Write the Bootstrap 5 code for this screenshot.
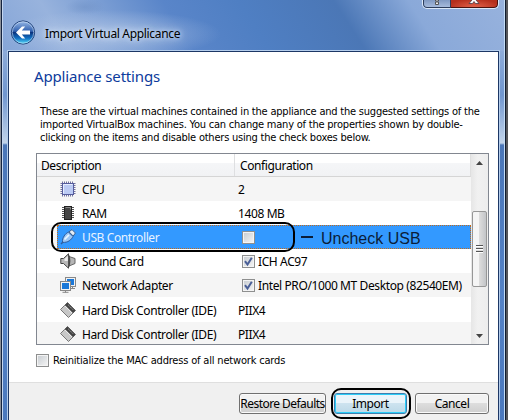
<!DOCTYPE html>
<html lang="en">
<head>
<meta charset="utf-8">
<title>Import Virtual Applicance</title>
<link href="https://cdn.jsdelivr.net/npm/bootstrap@5.3.0/dist/css/bootstrap.min.css" rel="stylesheet">
<style>
body{width:508px;height:420px;overflow:hidden;background:linear-gradient(90deg,#8a8f98 0 2px,#55565a 2px);font-family:"DejaVu Sans Condensed","DejaVu Sans",sans-serif;font-stretch:condensed;font-size:11px;line-height:13px;color:#000}
.window{width:505px;height:420px;margin-left:1px;border-left:1px solid #14233f;border-right:1px solid #101c30;padding:0 6px 0 6px;
 background:linear-gradient(180deg,#9db8df 0,#8eacd9 50px,#7096cf 95px,#c2d4ea 143px,#4a76b8 145px,#5482c6 300px,#4a78bd 420px);box-shadow:inset 1px 0 #c4d6ef,inset -1px 0 #c4dcf5;position:relative}
.titlebar{height:51px;margin:0 -5px;padding-left:7px;
 background:radial-gradient(ellipse 110px 24px at 108px 34px,#b5c9e8c0,#a9c0e400),radial-gradient(ellipse 20px 8px at 82px 7px,#6d8fc480,#6d8fc400),linear-gradient(57deg,#86a6d8 0,#98b3dd 13%,#5985c9 36%,#4f7fc3 50%,#4b77b6 68%,#8aa9d9 82%,#97b2dd 100%)}
.ttl{font-family:"Noto Sans","Open Sans",sans-serif;font-size:12px;letter-spacing:-.33px;text-shadow:0 0 5px #dce8f8,0 0 8px #cfdff5;margin:15px 0 0 9px}
.back-ico{margin-top:19px}
.capt{position:absolute;right:6px;top:0;width:77px;height:9px;border:1px solid #dbe8f8;border-top:0;border-radius:0 0 5px 5px;overflow:hidden}
.capt .help{width:28px;background:linear-gradient(#8099c2,#a6bbdc);border:1px solid #2c3d5c;border-top:0;border-bottom-left-radius:4px}
.capt .cls{background:radial-gradient(ellipse at 50% 100%,#e2624a,#b52f1c 80%);border:1px solid #4b120d;border-top:0;border-left:0;border-bottom-right-radius:4px}
.client{height:369px;border:1px solid #1d3765;border-bottom:0;outline:1px solid #b4cdec;background:#fff}
.page-part{height:330px;padding:16px 9px 0 25px}
.heading{font-family:"Noto Sans","Open Sans",sans-serif;font-size:15px;font-weight:400;letter-spacing:-.17px;line-height:16px;color:#0d3b9c;margin:0}
.intro{margin:21px 0 0 6px;white-space:nowrap;letter-spacing:-.215px}
.l3{letter-spacing:-.22px}
.tree{width:453px;height:192px;margin:9px 0 0 2px;border:1px solid #828790;font-family:"Noto Sans","Open Sans",sans-serif;font-size:12px;line-height:15px;letter-spacing:-.39px}
.hdr{height:23px;background:linear-gradient(#fff 0 9px,#f5f6f8 9px,#f1f2f4);border-bottom:1px solid #d5d5d5;border-right:1px solid #dfdfdf}
.hdr span{padding-top:1px}
.hdr .c1{width:198px;border-right:1px solid #dedfe1;padding-left:4px}
.hdr .c2{padding-left:5px}
.item{height:24.1px}
.item:nth-child(even){background:#f5f5f5}
.item .ico{width:16px;height:16px;margin:0 6px 0 23px;flex:none}
.item .nm{width:155px;flex:none}
.item .val{white-space:nowrap;margin-left:1px;flex:none}
.item span{display:block;line-height:22px;padding-top:2px}
.sel{background:linear-gradient(90deg,#f5f5f5 20px,#39f 20px)!important;color:#e8f3ff;position:relative}
.sel::after{content:"";position:absolute;left:20px;right:0;top:0;bottom:0;border:1px dotted #c06a1c}
.chk{width:13px;height:13px;border:1px solid #8e8f8f;background:linear-gradient(135deg,#c6cbd0,#f6f6f6);box-shadow:inset 0 0 0 1px #f4f4f4;flex:none}
.val .chk{margin:0 3px 0 4px}
.sbar{width:17px;background:linear-gradient(90deg,#e6e6e6,#f1f1f1 40%,#ededed)}
.thumb{width:15px;height:76px;margin:0 1px;border:1px solid #979797;border-radius:2px;background:linear-gradient(90deg,#f5f5f5 0 45%,#dcdcdc 50%,#c3c5c8)}
.grip{width:7px;height:8px;background:repeating-linear-gradient(#555 0 1px,#fff 1px 2px,#ddd 2px 3px)}
.mac{margin:8px 0 0 2px;letter-spacing:-.18px}
.mac span{padding-top:1px}
.ring{position:absolute;border:2px solid #000}
.ring-usb{left:49px;top:222px;width:244px;height:30px;border-radius:10px}
.ring-imp{left:329px;top:388px;width:80px;height:31px;border-radius:10px}
.note{position:absolute;left:299px;top:229px;font:16px/20px "Liberation Sans",Arial,sans-serif;color:#0b1d38;white-space:nowrap}
.note i{display:inline-block;width:12px;height:2px;background:#0b1d38;vertical-align:6px;margin-right:8px}
.foot{height:38px;background:#f0f0f0;border-top:1px solid #dfdfdf;padding:10px 9px 0 0}
.wbtn{height:21px;padding:0;border:1px solid #707070;border-radius:3px;font-family:"Noto Sans","Open Sans",sans-serif;font-size:12px;letter-spacing:-.45px;line-height:19px;background:linear-gradient(#f2f2f2 0 47%,#dddddd 50%,#cfcfcf);box-shadow:inset 0 0 0 1px #fafafa;color:#000;white-space:nowrap}
.wbtn.def{border-color:#3c7fb1;box-shadow:inset 0 0 0 1px #2ccdf7;background:linear-gradient(#eaf4fa 0 47%,#cde3ef 50%,#bcd9e8)}
.w-std{width:74px}.w-imp{width:73px}.w-rest{width:87px}.w-rest span{margin:0 -4px;letter-spacing:-.55px}
</style>
</head>
<body>
<div class="window">
 <div class="titlebar d-flex align-items-start">
  <svg class="back-ico" width="26" height="26" viewBox="0 0 26 26"><defs><linearGradient id="orb" x2="0" y2="1"><stop offset="0" stop-color="#9bbbe8"/><stop offset=".45" stop-color="#2f5fae"/><stop offset=".5" stop-color="#0b347f"/><stop offset=".75" stop-color="#1272c4"/><stop offset="1" stop-color="#5fe3fb"/></linearGradient></defs><circle cx="13" cy="13.500" r="11.600" fill="url(#orb)" stroke="#24457d"/><circle cx="13" cy="13.500" r="10.700" fill="none" stroke="#d5e7fa" stroke-opacity=".7" stroke-width=".8"/><path d="M6 13.500 12 7.500h3.200L11.800 11.600H20v3.800h-8.200l3.400 4.100H12z" fill="#fff"/></svg>
  <div class="ttl"><span class="d-block mt-2 pt-1">Import Virtual Applicance</span></div>
 </div>
 <div class="capt d-flex"><div class="help"><svg class="d-block mx-auto" width="8" height="6" viewBox="0 0 8 6"><path d="M2.500-1h3v2h-3zM2.500 2h3v2.500h-3z" fill="#eee" stroke="#555"/></svg></div><div class="cls flex-fill"><svg class="d-block mx-auto" width="12" height="5" viewBox="0 0 12 5"><path d="M3.500-2h5L8 0l3 3.500H7.500L6 1.500 4.500 3.500H1L4 0z" fill="#fff" stroke="#4a3a44" stroke-width=".8"/></svg></div></div>
 <div class="client">
  <div class="page-part">
   <h1 class="heading"><span>Appliance settings</span></h1>
   <div class="intro"><span class="l1">These are the virtual machines contained in the appliance and the suggested settings of the</span><br><span class="l2">imported VirtualBox machines. You can change many of the properties shown by double-</span><br><span class="l3">clicking on the items and disable others using the check boxes below.</span></div>
   <div class="tree d-flex">
    <div class="flex-fill overflow-hidden">
     <div class="hdr d-flex align-items-stretch"><div class="c1 d-flex align-items-center"><span>Description</span></div><div class="c2 d-flex align-items-center"><span>Configuration</span></div></div>
     <div class="item d-flex align-items-center"><svg class="ico" viewBox="0 0 16 16"><path d="M2 1.500h12M2 14.500h12M1.500 2v12M14.500 2v12" stroke="#3a3c78" stroke-opacity=".7" stroke-width="2" stroke-dasharray="1 1"/><rect x="2.500" y="2.500" width="11" height="11" fill="#bccbf4" stroke="#555c9c"/><path d="M3.500 12.500v-9h9" fill="none" stroke="#e6edff"/></svg><div class="nm"><span>CPU</span></div><div class="val"><span>2</span></div></div>
     <div class="item d-flex align-items-center"><svg class="ico" viewBox="0 0 16 16"><path d="M3.500 2v12M12.500 2v12" stroke="#555" stroke-width="3" stroke-dasharray="1 1"/><rect x="4.500" y="1.500" width="7" height="13" fill="#444" stroke="#222"/><path d="M5.500 2.500h5v2" fill="none" stroke="#888"/></svg><div class="nm"><span>RAM</span></div><div class="val"><span>1408 MB</span></div></div>
     <div class="item sel d-flex align-items-center"><svg class="ico" viewBox="0 0 16 16"><path d="M1 15 3.500 12.500" stroke="#2b5c9e" stroke-width="1.500"/><path d="M2.500 13.300C2 8.500 5.500 4.500 8.500 3L13 7.500C11.500 10.500 8 14 2.500 13.300z" fill="#9cc6f5" stroke="#2d5b9c"/><path d="M9 2.800 12 .6 15.400 4 13.200 7z" fill="#e6edf5" stroke="#3a5f90"/><path d="M4.500 10.500 9 5.800" stroke="#e8f5ff" stroke-width="1.800"/></svg><div class="nm"><span>USB Controller</span></div><div class="val"><div class="chk"></div></div></div>
     <div class="item d-flex align-items-center"><svg class="ico" viewBox="0 0 16 16"><path d="M9 3.500 15 5.500v5L9 13z" fill="#b5b5b5" stroke="#666"/><path d="M.8 5.500h2.700L8.500.8v14.400L3.500 10.500H.8z" fill="#b9b9b9" stroke="#444"/><path d="M8.500 1.500c1.800 3 1.800 10 0 13" fill="#666" stroke="#444"/><path d="M4.500 6 7.800 3v5L4.500 8z" fill="#eee"/></svg><div class="nm"><span>Sound Card</span></div><div class="val d-flex align-items-center"><div class="chk"><svg class="d-block" width="11" height="11" viewBox="0 0 11 11"><path d="M2 5.200 4.500 8.500 8.800 1.800" fill="none" stroke="#4a5f97" stroke-width="2"/></svg></div><span>ICH AC97</span></div></div>
     <div class="item d-flex align-items-center"><svg class="ico" viewBox="0 0 16 16"><rect x="5.500" y=".5" width="10" height="9" fill="#f2f2f2" stroke="#888"/><rect x="7" y="2" width="7" height="6" fill="#1b78d8"/><path d="M10 11.500h5M12.500 9.500v2" stroke="#888"/><rect x=".5" y="4.500" width="10" height="9" fill="#f2f2f2" stroke="#888"/><rect x="2" y="6" width="7" height="6" fill="#1b78d8"/><path d="M2.500 15.300h6M5.500 13.500v2" stroke="#888"/></svg><div class="nm"><span>Network Adapter</span></div><div class="val d-flex align-items-center"><div class="chk"><svg class="d-block" width="11" height="11" viewBox="0 0 11 11"><path d="M2 5.200 4.500 8.500 8.800 1.800" fill="none" stroke="#4a5f97" stroke-width="2"/></svg></div><span>Intel PRO/1000 MT Desktop (82540EM)</span></div></div>
     <div class="item d-flex align-items-center"><svg class="ico" viewBox="0 0 16 16"><path d="M.5 7.500 7.500.5l8 8-7 7z" fill="#c8c8c8" stroke="#777"/><path d="M7.500.5l8 8-2.700 2.700-8-8z" fill="#444"/><path d="M5 3.800 12.200 11" fill="none" stroke="#f8f8f8"/><path d="M8.300 3 13.300 8" stroke="#aaa" stroke-dasharray="1.500 1"/></svg><div class="nm"><span>Hard Disk Controller (IDE)</span></div><div class="val"><span>PIIX4</span></div></div>
     <div class="item d-flex align-items-center"><svg class="ico" viewBox="0 0 16 16"><path d="M.5 7.500 7.500.5l8 8-7 7z" fill="#c8c8c8" stroke="#777"/><path d="M7.500.5l8 8-2.700 2.700-8-8z" fill="#444"/><path d="M5 3.800 12.200 11" fill="none" stroke="#f8f8f8"/><path d="M8.300 3 13.300 8" stroke="#aaa" stroke-dasharray="1.500 1"/></svg><div class="nm"><span>Hard Disk Controller (IDE)</span></div><div class="val"><span>PIIX4</span></div></div>
    </div>
    <div class="sbar d-flex flex-column justify-content-between align-items-center">
     <svg width="17" height="57" viewBox="0 0 17 57"><path d="M5 11 8.500 7 12 11z" fill="#444"/></svg>
     <div class="thumb d-flex align-items-center justify-content-center"><div class="grip"></div></div>
     <svg width="17" height="57" viewBox="0 0 17 57"><path d="M5 47h7L8.500 51z" fill="#444"/></svg>
    </div>
   </div>
   <div class="mac d-flex align-items-center"><div class="chk"></div><span class="ms-1">Reinitialize the MAC address of all network cards</span></div>
  </div>
  <div class="foot d-flex justify-content-end gap-2"><button class="wbtn w-rest"><span>Restore Defaults</span></button><button class="wbtn def w-imp"><span>Import</span></button><button class="wbtn w-std"><span>Cancel</span></button></div>
 </div>
 <div class="ring ring-usb"></div><div class="ring ring-imp"></div>
 <div class="note"><i></i>Uncheck USB</div>
</div>
<script src="https://cdn.jsdelivr.net/npm/bootstrap@5.3.0/dist/js/bootstrap.bundle.min.js"></script>
</body>
</html>
